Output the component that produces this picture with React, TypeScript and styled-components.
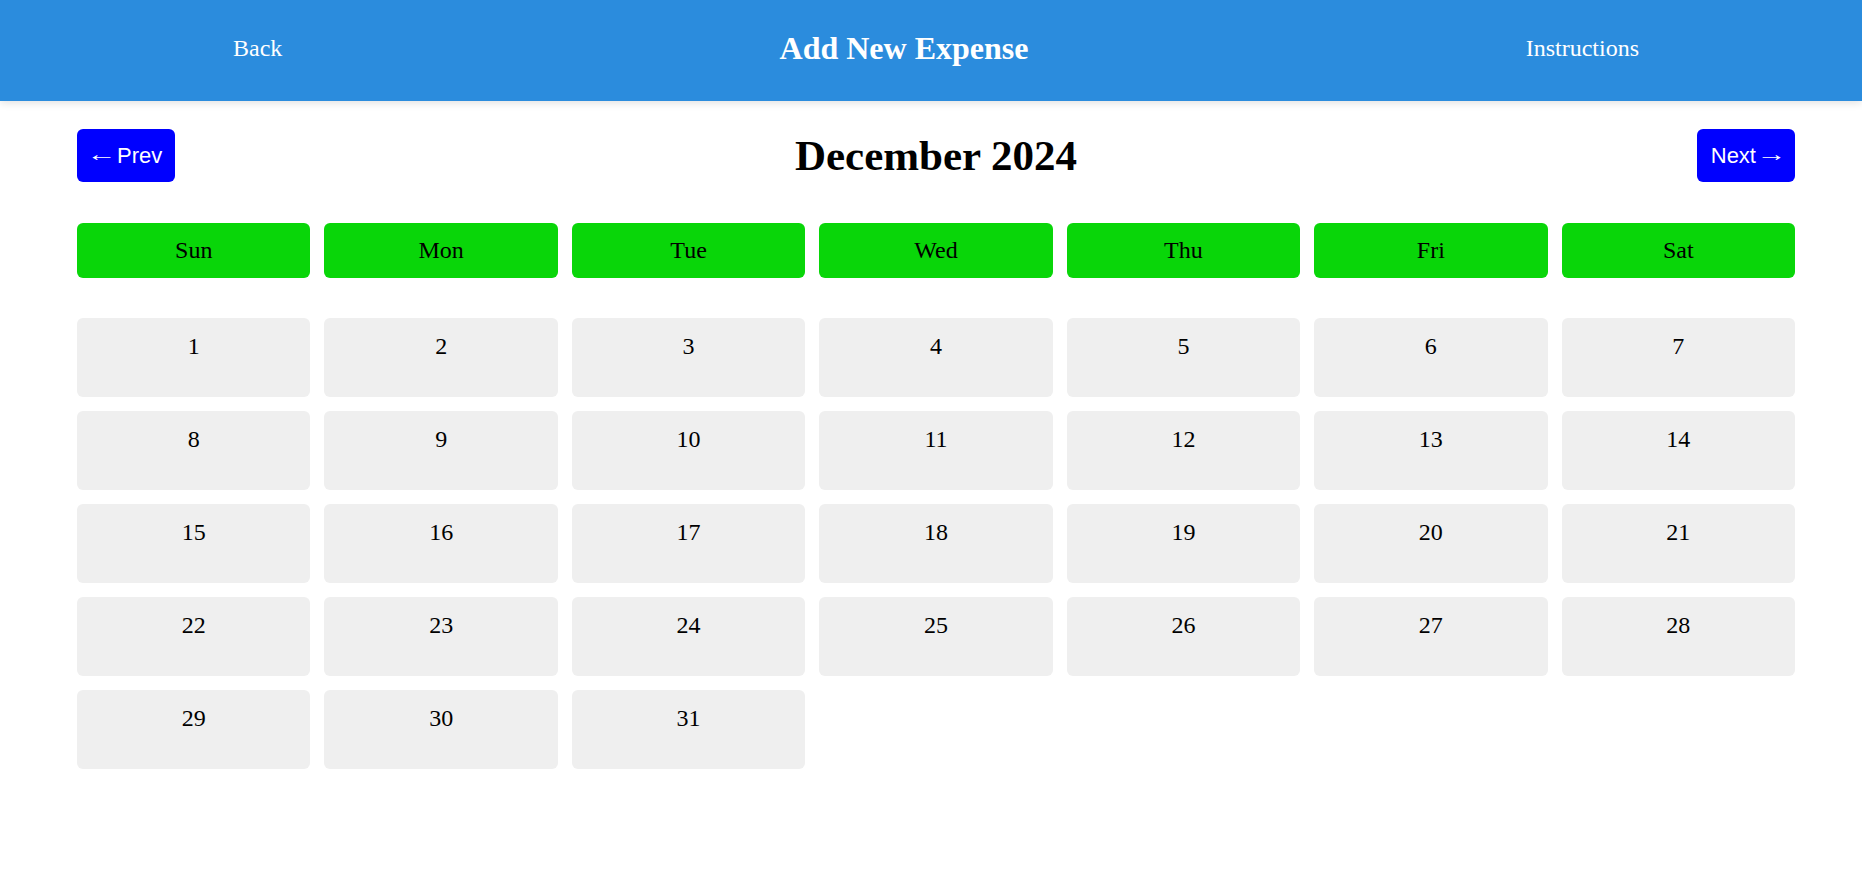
import React from 'react'
import styled, { createGlobalStyle } from 'styled-components'

const GlobalStyle = createGlobalStyle`
  html, body {
    margin: 0;
    padding: 0;
    background: #ffffff;
    font-family: "Liberation Serif", "Times New Roman", serif;
  }
  * {
    box-sizing: border-box;
  }
`

const weekDays = ['Sun', 'Mon', 'Tue', 'Wed', 'Thu', 'Fri', 'Sat']

const buildDays = (year: number, month: number) => {
  const first = new Date(year, month, 1).getDay()
  const total = new Date(year, month + 1, 0).getDate()
  const cells: (number | null)[] = []
  for (let i = 0; i < first; i++) cells.push(null)
  for (let d = 1; d <= total; d++) cells.push(d)
  return cells
}

export default function App() {
  const days = buildDays(2024, 11)

  return (
    <>
      <GlobalStyle />
      <S.Header>
        <S.NavLink>Back</S.NavLink>
        <S.PageTitle>Add New Expense</S.PageTitle>
        <S.NavLink>Instructions</S.NavLink>
      </S.Header>
      <S.Main>
        <S.MonthBar>
          <S.NavButton>
            <S.Arrow>&larr;</S.Arrow>Prev
          </S.NavButton>
          <S.MonthTitle>December 2024</S.MonthTitle>
          <S.NavButton>
            Next<S.Arrow>&rarr;</S.Arrow>
          </S.NavButton>
        </S.MonthBar>
        <S.WeekRow>
          {weekDays.map(day => (
            <S.WeekDay key={day}>{day}</S.WeekDay>
          ))}
        </S.WeekRow>
        <S.DayGrid>
          {days.map((day, i) =>
            day ? <S.DayCell key={i}>{day}</S.DayCell> : <div key={i} />
          )}
        </S.DayGrid>
      </S.Main>
    </>
  )
}

export const S = {
  Header: styled.header`
    height: 101px;
    display: flex;
    justify-content: space-between;
    align-items: center;
    padding: 0 223px 5px 233px;
    background: #2b8cdd;
    color: #ffffff;
    box-shadow: 0 2px 8px rgba(0, 0, 0, 0.12);
  `,
  NavLink: styled.span`
    font-size: 24px;
    cursor: pointer;
  `,
  PageTitle: styled.h1`
    margin: 0;
    font-size: 32px;
    font-weight: bold;
  `,
  Main: styled.main`
    padding: 28px 67px 40px 77px;
  `,
  MonthBar: styled.div`
    display: flex;
    justify-content: space-between;
    align-items: center;
    margin-bottom: 41px;
  `,
  NavButton: styled.button`
    height: 53px;
    padding: 0 13px 0 14px;
    display: flex;
    align-items: center;
    gap: 5px;
    border: 0;
    border-radius: 6px;
    background: #0000ff;
    color: #ffffff;
    font-family: "Liberation Sans", Arial, sans-serif;
    font-size: 22px;
    cursor: pointer;
  `,
  Arrow: styled.span`
    display: inline-block;
    width: 21px;
    text-align: center;
    font-size: 20px;
    transform: translateY(-1px) scaleX(1.5);
  `,
  MonthTitle: styled.h2`
    margin: 0;
    font-size: 43px;
    font-weight: bold;
    color: #000000;
  `,
  WeekRow: styled.div`
    display: grid;
    grid-template-columns: repeat(7, 1fr);
    gap: 14px;
    margin-bottom: 40px;
  `,
  WeekDay: styled.div`
    height: 55px;
    display: flex;
    align-items: center;
    justify-content: center;
    background: #09d609;
    border-radius: 6px;
    font-size: 24px;
    color: #000000;
  `,
  DayGrid: styled.div`
    display: grid;
    grid-template-columns: repeat(7, 1fr);
    gap: 14px;
  `,
  DayCell: styled.div`
    height: 79px;
    padding-top: 15px;
    text-align: center;
    background: #efefef;
    border-radius: 6px;
    font-size: 24px;
    color: #000000;
  `,
}
